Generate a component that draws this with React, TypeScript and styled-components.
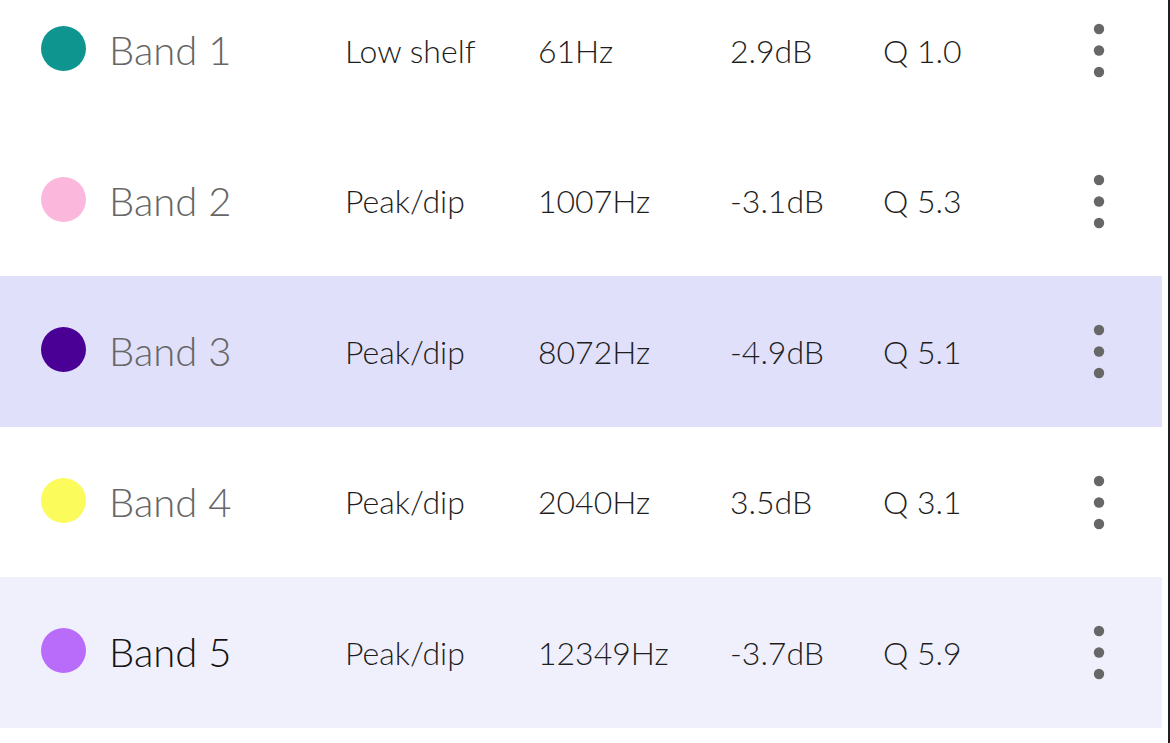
import styled, {createGlobalStyle} from "styled-components";

const GlobalStyle = createGlobalStyle`
    html, body {
        margin: 0;
        padding: 0;
        background: #ffffff;
        font-family: Lato, "Noto Sans", sans-serif;
        overflow: hidden;
    }
`

type Band = {
    name: string;
    color: string;
    type: string;
    freq: string;
    gain: string;
    q: string;
    tone?: 'selected' | 'hover';
    active?: boolean;
}

const bands: Band[] = [
    {name: 'Band 1', color: '#0e9590', type: 'Low shelf', freq: '61Hz', gain: '2.9dB', q: 'Q 1.0'},
    {name: 'Band 2', color: '#fbb8dc', type: 'Peak/dip', freq: '1007Hz', gain: '-3.1dB', q: 'Q 5.3'},
    {name: 'Band 3', color: '#4a0095', type: 'Peak/dip', freq: '8072Hz', gain: '-4.9dB', q: 'Q 5.1', tone: 'selected'},
    {name: 'Band 4', color: '#fbfb5c', type: 'Peak/dip', freq: '2040Hz', gain: '3.5dB', q: 'Q 3.1'},
    {name: 'Band 5', color: '#b96cfa', type: 'Peak/dip', freq: '12349Hz', gain: '-3.7dB', q: 'Q 5.9', tone: 'hover', active: true},
]

const MoreIcon = () => (
    <svg width="12" height="56" viewBox="0 0 12 56">
        <circle cx="6" cy="6" r="5.2" fill="#676767"/>
        <circle cx="6" cy="27.5" r="5.2" fill="#676767"/>
        <circle cx="6" cy="49" r="5.2" fill="#676767"/>
    </svg>
)

export default function App() {
    return (
        <>
            <GlobalStyle/>
            <Panel>
                <List>
                    {bands.map((b) => (
                        <Row key={b.name} $tone={b.tone}>
                            <Dot $color={b.color}/>
                            <Name $active={b.active}>{b.name}</Name>
                            <Cell>{b.type}</Cell>
                            <Cell>{b.freq}</Cell>
                            <Cell>{b.gain}</Cell>
                            <Cell>{b.q}</Cell>
                            <Menu><MoreIcon/></Menu>
                        </Row>
                    ))}
                </List>
            </Panel>
        </>
    );
}

const Panel = styled.div`
    width: 1168px;
    height: 743px;
    border-right: 2px solid #1e1e1e;
    overflow: hidden;
`
const List = styled.ul`
    list-style: none;
    margin: -25px 6px 0 0;
    padding: 0;
`
const Row = styled.li<{ $tone?: 'selected' | 'hover' }>`
    height: 150.5px;
    display: grid;
    grid-template-columns: 68px 236px 193px 192px 153px 1fr 40px;
    align-items: center;
    padding: 0 43px 0 41px;
    background: ${({$tone}) => $tone === 'selected' ? '#e0e0fb' : $tone === 'hover' ? '#f0f0fd' : '#ffffff'};
`
const Dot = styled.span<{ $color: string }>`
    width: 45px;
    height: 45px;
    border-radius: 50%;
    background: ${({$color}) => $color};
    margin-top: -3px;
`
const Name = styled.span<{ $active?: boolean }>`
    font-size: 40px;
    font-weight: 300;
    color: ${({$active}) => $active ? '#141414' : '#666666'};
    white-space: nowrap;
`
const Cell = styled.span`
    font-size: 32px;
    font-weight: 300;
    color: #1e1e1e;
    white-space: nowrap;
`
const Menu = styled.span`
    display: flex;
    justify-content: center;
    margin-top: 2px;
`
